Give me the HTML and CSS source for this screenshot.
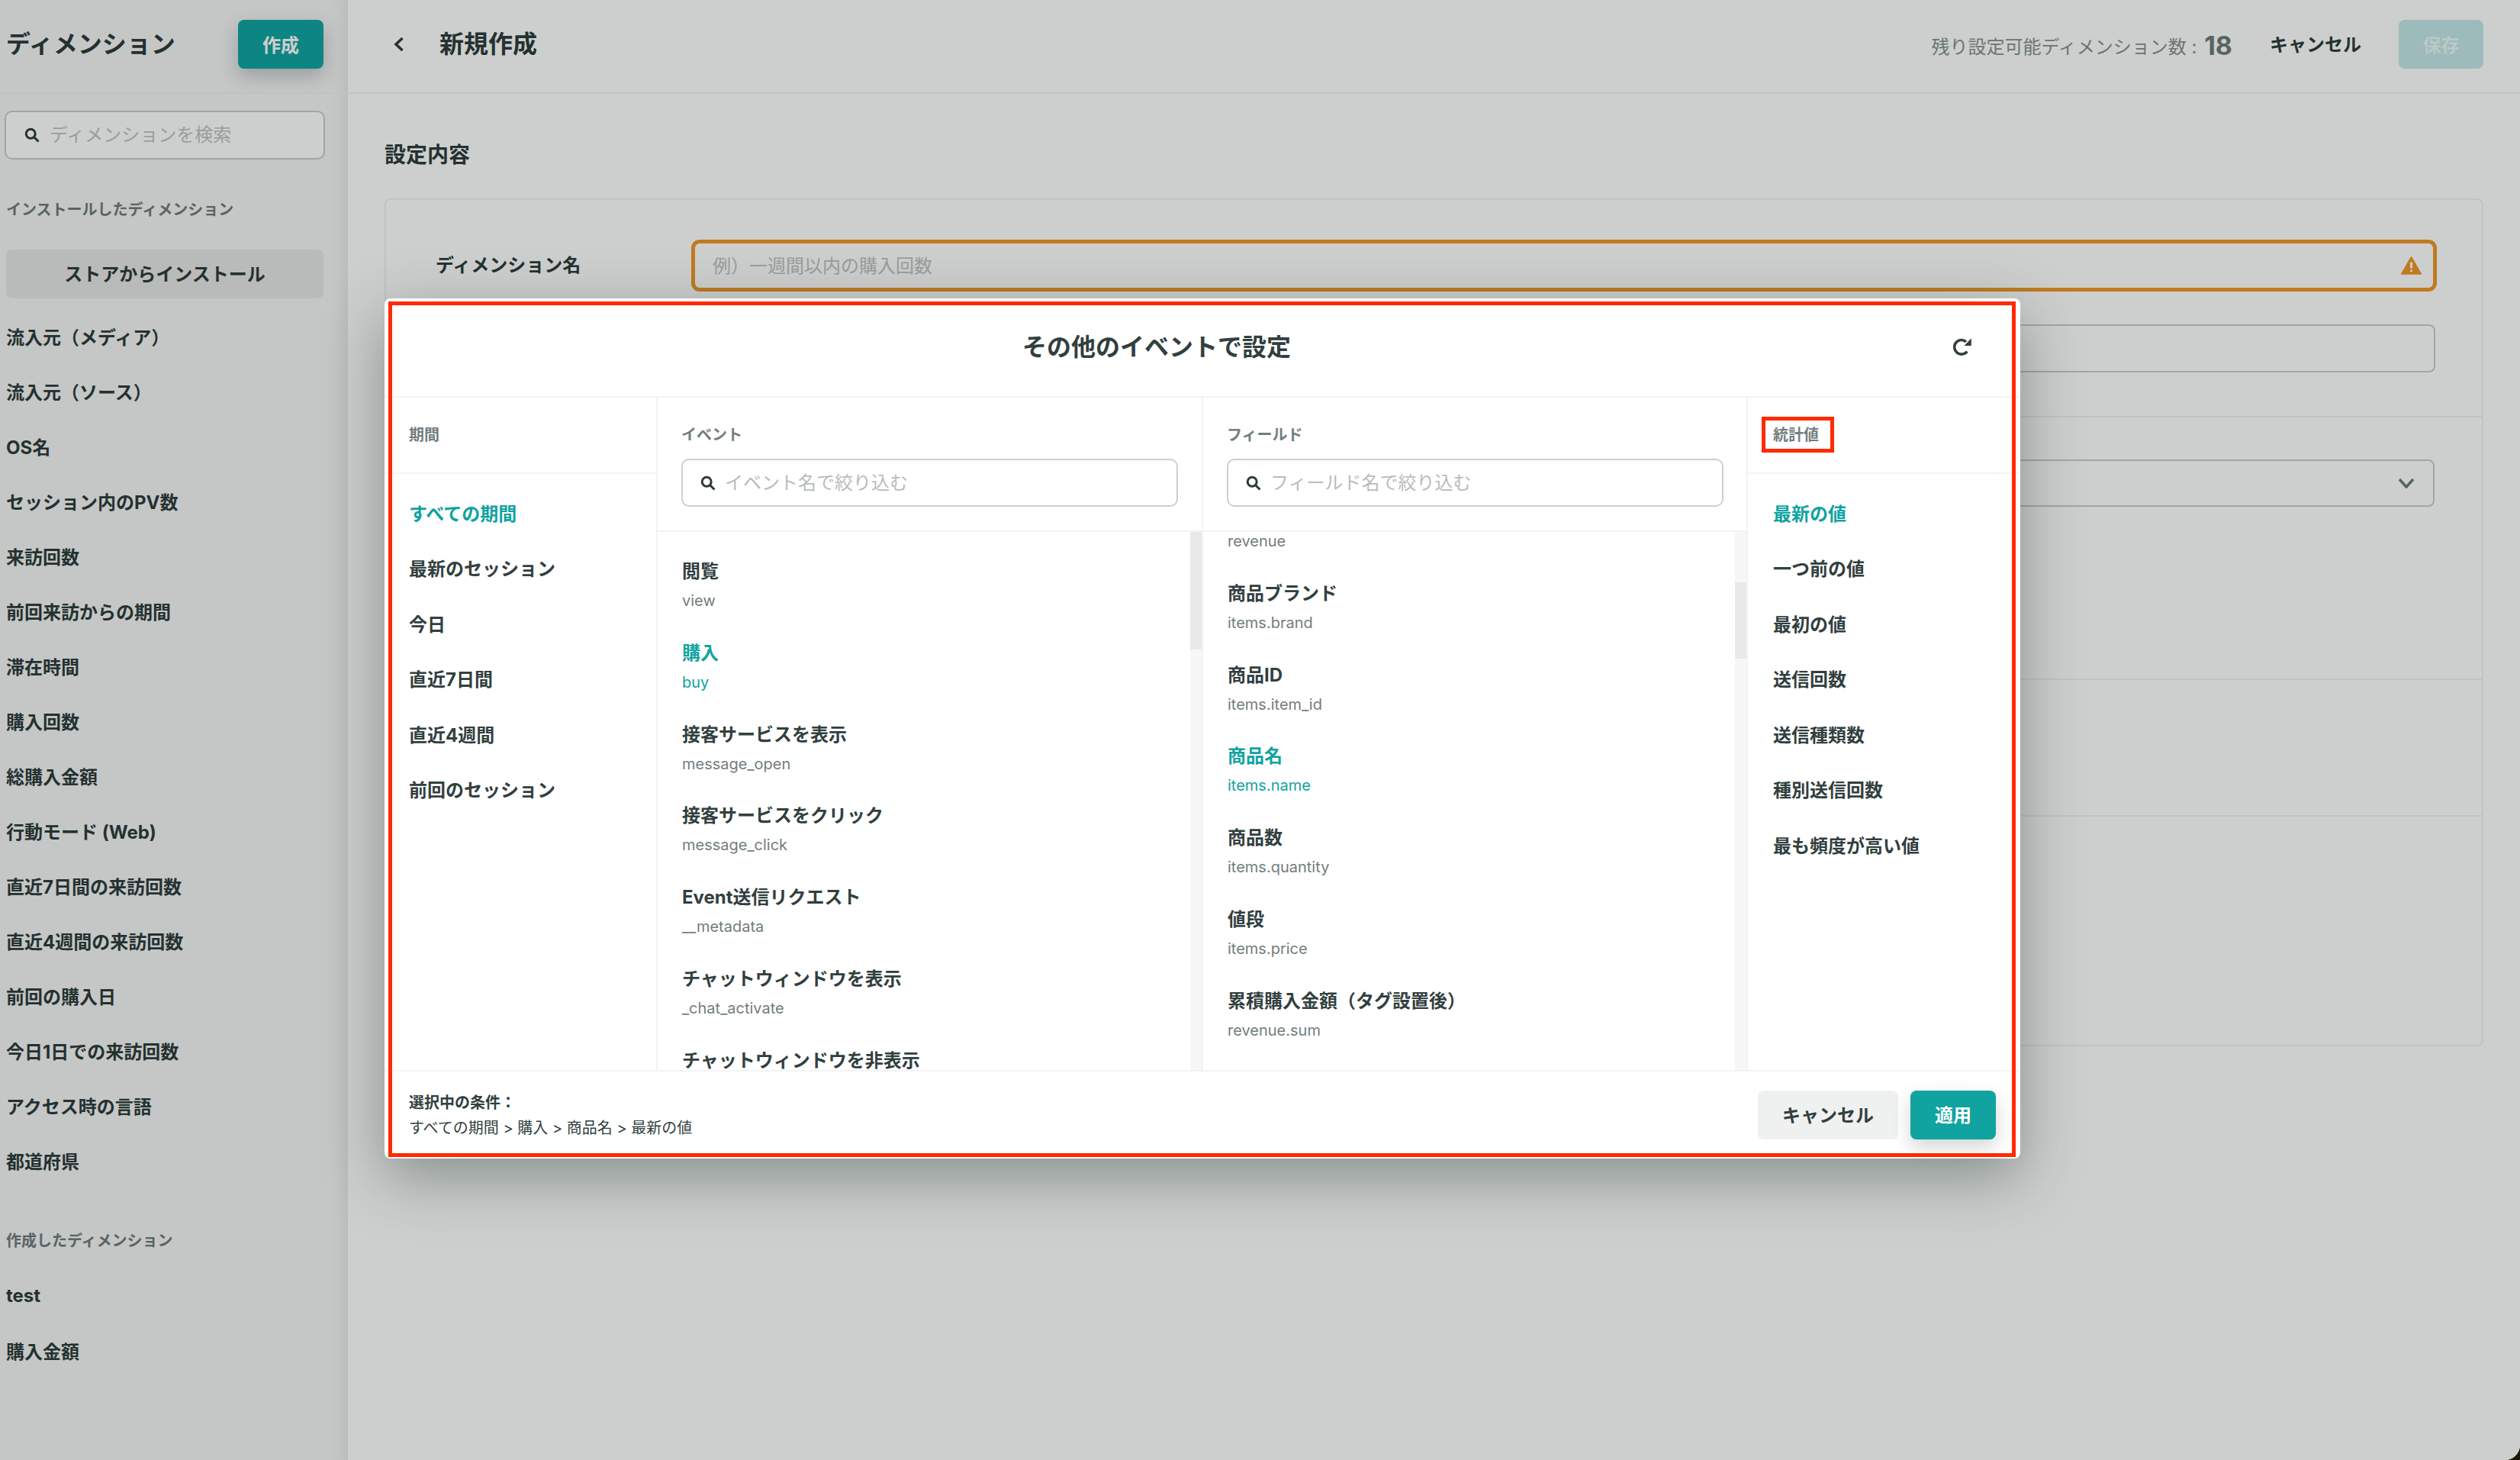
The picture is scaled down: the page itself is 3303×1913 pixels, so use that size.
FILE: index.html
```html
<!DOCTYPE html>
<html lang="ja">
<head>
<meta charset="utf-8">
<title>ディメンション 新規作成</title>
<link rel="stylesheet" href="styles.css">
</head>
<body>
<div class="app">
  <aside class="sidebar">
    <div class="side-head">
      <h1 class="side-title">ディメンション</h1>
      <button class="btn-create">作成</button>
    </div>
    <div class="side-body">
      <div class="side-search">
        <svg class="icon-search" viewBox="0 0 20 20"><circle cx="8.2" cy="8.2" r="6" /><path d="M12.6 12.6 18.5 18.5" /></svg>
        <span class="ph-side">ディメンションを検索</span>
      </div>
      <div class="side-label side-label-first">インストールしたディメンション</div>
      <button class="btn-store">ストアからインストール</button>
      <ul class="side-list">
        <li>流入元（メディア）</li>
        <li>流入元（ソース）</li>
        <li>OS名</li>
        <li>セッション内のPV数</li>
        <li>来訪回数</li>
        <li>前回来訪からの期間</li>
        <li>滞在時間</li>
        <li>購入回数</li>
        <li>総購入金額</li>
        <li>行動モード (Web)</li>
        <li>直近7日間の来訪回数</li>
        <li>直近4週間の来訪回数</li>
        <li>前回の購入日</li>
        <li>今日1日での来訪回数</li>
        <li>アクセス時の言語</li>
        <li>都道府県</li>
      </ul>
      <div class="side-label side-label-second">作成したディメンション</div>
      <ul class="side-list side-list-second">
        <li>test</li>
        <li>購入金額</li>
      </ul>
    </div>
  </aside>

  <main class="main">
    <header class="main-head">
      <svg class="icon-back" viewBox="0 0 14 20"><path d="M11.5 2 3 10l8.500 8" /></svg>
      <h2 class="main-title">新規作成</h2>
      <div class="main-actions">
        <span class="remain">残り設定可能ディメンション数 : <b class="remain-num">18</b></span>
        <span class="link-cancel">キャンセル</span>
        <button class="btn-save">保存</button>
      </div>
    </header>
    <div class="main-body">
      <h3 class="section-title">設定内容</h3>
      <section class="card">
        <div class="card-row row-name">
          <div class="field">
            <label class="field-label">ディメンション名</label>
            <div class="input input-warn">
              <span class="ph-input">例）一週間以内の購入回数</span>
              <svg class="icon-warn" viewBox="0 0 27 24"><path class="warn-tri" d="M13.500 1.200 26 22.800H1Z" /><path class="warn-mark" d="M13.500 7.500v8M13.500 17.400v2.600" /></svg>
            </div>
          </div>
          <div class="field field-second">
            <label class="field-label"></label>
            <div class="input input-second"></div>
          </div>
        </div>
        <div class="card-row row-select">
          <div class="field">
            <label class="field-label"></label>
            <div class="input input-select">
              <svg class="icon-chev" viewBox="0 0 22 14"><path d="M2 2 11 12 20 2" /></svg>
            </div>
          </div>
        </div>
        <div class="card-row row-third"></div>
        <div class="card-row row-fourth"></div>
      </section>
    </div>
  </main>

  <div class="overlay"></div>

  <div class="modal">
    <div class="modal-head">
      <h2 class="modal-title">その他のイベントで設定</h2>
      <svg class="icon-refresh" viewBox="0 0 24 24"><path class="ref-arc" d="M18.300 17.500A9.300 9.300 0 1 1 17 4.800" /><path class="ref-head" d="M23.800 .3V10H14.500Z" /></svg>
    </div>
    <div class="modal-body">
      <div class="col col-period">
        <div class="col-head col-head-plain"><span class="col-label">期間</span></div>
        <ul class="opts">
          <li class="active">すべての期間</li>
          <li>最新のセッション</li>
          <li>今日</li>
          <li>直近7日間</li>
          <li>直近4週間</li>
          <li>前回のセッション</li>
        </ul>
      </div>
      <div class="col col-event">
        <div class="col-head col-head-search">
          <span class="col-label">イベント</span>
          <div class="modal-search">
            <svg class="icon-search" viewBox="0 0 20 20"><circle cx="8.2" cy="8.2" r="6" /><path d="M12.6 12.6 18.5 18.5" /></svg>
            <span class="ph-modal">イベント名で絞り込む</span>
          </div>
        </div>
        <div class="scroll">
          <ul class="rows">
            <li><span class="r-name">閲覧</span><span class="r-sub">view</span></li>
            <li class="active"><span class="r-name">購入</span><span class="r-sub">buy</span></li>
            <li><span class="r-name">接客サービスを表示</span><span class="r-sub">message_open</span></li>
            <li><span class="r-name">接客サービスをクリック</span><span class="r-sub">message_click</span></li>
            <li><span class="r-name">Event送信リクエスト</span><span class="r-sub">__metadata</span></li>
            <li><span class="r-name">チャットウィンドウを表示</span><span class="r-sub">_chat_activate</span></li>
            <li><span class="r-name">チャットウィンドウを非表示</span></li>
          </ul>
          <div class="track"><div class="thumb thumb-event"></div></div>
        </div>
      </div>
      <div class="col col-field">
        <div class="col-head col-head-search col-head-field">
          <span class="col-label">フィールド</span>
          <div class="modal-search">
            <svg class="icon-search" viewBox="0 0 20 20"><circle cx="8.2" cy="8.2" r="6" /><path d="M12.6 12.6 18.5 18.5" /></svg>
            <span class="ph-modal">フィールド名で絞り込む</span>
          </div>
        </div>
        <div class="scroll">
          <ul class="rows rows-scrolled">
            <li><span class="r-sub">revenue</span></li>
            <li><span class="r-name">商品ブランド</span><span class="r-sub">items.brand</span></li>
            <li><span class="r-name">商品ID</span><span class="r-sub">items.item_id</span></li>
            <li class="active"><span class="r-name">商品名</span><span class="r-sub">items.name</span></li>
            <li><span class="r-name">商品数</span><span class="r-sub">items.quantity</span></li>
            <li><span class="r-name">値段</span><span class="r-sub">items.price</span></li>
            <li><span class="r-name">累積購入金額（タグ設置後）</span><span class="r-sub">revenue.sum</span></li>
          </ul>
          <div class="track"><div class="thumb thumb-field"></div></div>
        </div>
      </div>
      <div class="col col-stat">
        <div class="col-head col-head-plain"><span class="col-label">統計値</span></div>
        <ul class="opts">
          <li class="active">最新の値</li>
          <li>一つ前の値</li>
          <li>最初の値</li>
          <li>送信回数</li>
          <li>送信種類数</li>
          <li>種別送信回数</li>
          <li>最も頻度が高い値</li>
        </ul>
      </div>
    </div>
    <div class="modal-foot">
      <div class="cond">
        <div class="cond-title">選択中の条件：</div>
        <div class="cond-path">すべての期間 &gt; 購入 &gt; 商品名 &gt; 最新の値</div>
      </div>
      <div class="foot-btns">
        <button class="btn-cancel">キャンセル</button>
        <button class="btn-apply">適用</button>
      </div>
    </div>
    <div class="mark mark-modal"></div>
    <div class="mark mark-stat"></div>
  </div>
</div>
</body>
</html>
```

FILE: styles.css
```css
* { box-sizing: border-box; }
html, body { margin: 0; padding: 0; width: 3303px; height: 1913px; overflow: hidden; background: #1a1a08; }
body { font-family: Inter, "Noto Sans CJK JP", "Noto Sans", sans-serif; color: #2c3a3a; font-size: 24px; }
h1, h2, h3, ul { margin: 0; padding: 0; list-style: none; }
button { font-family: inherit; border: 0; padding: 0; }

.app { position: relative; display: flex; width: 3303px; height: 1913px; background: #fff; border-bottom-right-radius: 20px; overflow: hidden; }

/* sidebar */
.sidebar { width: 456px; flex: none; background: #f5f5f5; box-shadow: inset -24px 0 24px -24px rgba(0,0,0,.1); }
.side-head { height: 123px; border-bottom: 2px solid #f0f0f0; display: flex; align-items: center; justify-content: space-between; padding: 0 32px 6px 8px; }
.side-title { font-size: 32px; font-weight: 700; line-height: 44px; }
.btn-create { width: 112px; height: 64px; border-radius: 8px; background: #10a3a0; color: #fff; font-size: 24px; font-weight: 700; box-shadow: 0 10px 24px rgba(30,50,50,.25); }
.side-body { padding: 22px 32px 0 8px; }
.side-search { width: 420px; height: 64px; margin-left: -2px; border: 2px solid #c6cccb; border-radius: 10px; background: #fff; display: flex; align-items: center; padding-left: 24px; gap: 13px; }
.icon-search { width: 20px; height: 20px; flex: none; fill: none; stroke: #2c3a3a; stroke-width: 3; }
.ph-side { color: #bcc2c1; line-height: 32px; }
.side-label { font-size: 20px; line-height: 28px; color: #6c7a7a; font-weight: 700; }
.side-label-first { margin-top: 52px; }
.side-label-second { margin-top: 54px; }
.btn-store { display: block; width: 416px; height: 64px; margin-top: 38px; padding-bottom: 3px; background: #e6e6e6; border-radius: 8px; color: #2c3a3a; font-size: 24px; font-weight: 700; }
.side-list { margin-top: 15px; }
.side-list-second { margin-top: 23px; }
.side-list li { height: 72px; padding-bottom: 3px; display: flex; align-items: center; font-weight: 700; white-space: nowrap; }

/* main */
.main { flex: 1; min-width: 0; background: #fff; }
.main-head { height: 123px; border-bottom: 2px solid #f0f0f0; display: flex; align-items: center; padding: 0 48px 6px 60px; }
.icon-back { width: 14px; height: 20px; fill: none; stroke: #2c3a3a; stroke-width: 3.500; flex: none; }
.main-title { font-size: 32px; font-weight: 700; line-height: 44px; margin-left: 46px; }
.main-actions { margin-left: auto; display: flex; align-items: center; }
.remain { color: #84908f; font-size: 24px; display: flex; align-items: center; white-space: pre; margin-top: 4px; }
.remain-num { font-size: 34px; font-weight: 700; color: #6c7a7a; margin-left: 3px; }
.link-cancel { margin-left: 49px; font-weight: 700; margin-top: -2px; }
.btn-save { width: 111px; height: 64px; margin-left: 49px; background: #c2e6e6; color: #ebf7f7; font-size: 24px; font-weight: 700; border-radius: 8px; }
.main-body { padding: 0 48px; }
.section-title { font-size: 28px; font-weight: 700; line-height: 40px; margin-top: 60px; }
.card { margin-top: 37px; border: 2px solid #f0f0f0; border-radius: 8px; height: 1111px; }
.card-row { border-bottom: 2px solid #f0f0f0; }
.card-row:last-child { border-bottom: 0; }
.row-name { height: 285px; padding-top: 55px; }
.row-select { height: 344px; padding-top: 55px; }
.row-third { height: 179px; }
.row-fourth { height: 300px; }
.field { display: flex; align-items: center; padding: 0 62px 0 65px; }
.field-second { margin-top: 46px; padding-right: 61px; }
.field-label { width: 338px; flex: none; font-weight: 700; line-height: 34px; }
.input { flex: 1; height: 62px; border: 2px solid #c6cccb; border-radius: 8px; background: #fff; display: flex; align-items: center; justify-content: space-between; padding: 0 15px 0 23px; }
.input-second { height: 63px; }
.input-warn { border-color: #ef9724; box-shadow: 0 0 0 3px #ef9724; }
.input-select { justify-content: flex-end; padding-right: 24px; }
.ph-input { color: #bcc2c1; padding-bottom: 3px; }
.icon-warn { width: 27px; height: 24px; flex: none; }
.warn-tri { fill: #ef9724; stroke: #ef9724; stroke-width: 2; stroke-linejoin: round; }
.warn-mark { fill: none; stroke: #fff; stroke-width: 3; }
.icon-chev { width: 22px; height: 14px; fill: none; stroke: #6c7a7a; stroke-width: 3.500; }

/* overlay + modal */
.overlay { position: absolute; inset: 0; background: rgba(5,15,10,.2); }
.modal { position: absolute; left: 504px; top: 391px; width: 2144px; height: 1127px; background: #fff; border-radius: 8px; display: flex; flex-direction: column; box-shadow: 0 24px 80px rgba(20,40,40,.38); }
.modal-head { height: 130px; flex: none; border-bottom: 2px solid #f3f3f3; display: flex; align-items: center; justify-content: center; position: relative; padding: 0 120px 0 0; }
.modal-title { font-size: 32px; font-weight: 700; line-height: 44px; color: #323f3f; }
.icon-refresh { width: 24px; height: 24px; position: absolute; left: 2056px; top: 52px; }
.ref-arc { fill: none; stroke: #323f3f; stroke-width: 3.600; }
.ref-head { fill: #323f3f; }
.modal-body { flex: 1; min-height: 0; display: flex; }
.col { display: flex; flex-direction: column; border-right: 2px solid #f3f3f3; min-height: 0; }
.col-period { width: 358px; }
.col-event { width: 715px; }
.col-field { width: 714px; }
.col-stat { flex: 1; border-right: 0; }
.col-head { flex: none; border-bottom: 2px solid #f3f3f3; }
.col-head-plain { height: 100px; display: flex; align-items: center; padding: 0 32px; }
.col-stat .col-head-plain, .col-stat .opts { padding-left: 33px; }
.col-head-search { height: 176px; padding: 35px 31px 0; display: flex; flex-direction: column; }
.col-head-field { padding-right: 30px; }
.col-label { font-size: 20px; line-height: 28px; font-weight: 700; color: #727d7d; }
.modal-search { height: 63px; margin-top: 17px; border: 2px solid #ccd0d0; border-radius: 10px; display: flex; align-items: center; padding-left: 23px; gap: 12px; }
.ph-modal { color: #b7bcbc; line-height: 32px; }
.opts { padding: 14px 32px 0; }
.opts li { height: 72.500px; display: flex; align-items: center; font-weight: 700; color: #323f3f; white-space: nowrap; }
.opts li.active, .rows li.active .r-name, .rows li.active .r-sub { color: #10a3a0; }
.scroll { flex: 1; min-height: 0; position: relative; overflow: hidden; }
.rows { padding: 35px 32px 0; }
.rows li { display: flex; flex-direction: column; gap: 7px; margin-bottom: 37.800px; }
.rows-scrolled { margin-top: -2px; padding-top: 0; }
.r-name { line-height: 34px; font-weight: 700; color: #323f3f; white-space: nowrap; }
.r-sub { line-height: 28px; font-size: 20px; color: #727d7d; }
.track { position: absolute; right: 0; top: 0; bottom: 0; width: 15px; background: #f7f7f7; }
.thumb { position: absolute; left: 0; right: 0; background: #e8e9e9; }
.thumb-event { top: 0; height: 154px; }
.thumb-field { top: 66px; height: 100px; }
.modal-foot { height: 116px; flex: none; border-top: 2px solid #f3f3f3; display: flex; align-items: center; justify-content: space-between; padding: 0 32px; }
.cond { font-size: 20px; line-height: 28px; color: #323f3f; margin-top: 1px; }
.cond-title { font-weight: 700; }
.cond-path { margin-top: 5px; }
.foot-btns { display: flex; gap: 16px; margin-top: -1px; }
.btn-cancel { width: 184px; height: 64px; padding-bottom: 2px; background: #eff1f1; border-radius: 8px; color: #323f3f; font-size: 24px; font-weight: 700; }
.btn-apply { width: 112px; height: 64px; padding-bottom: 2px; background: #10a3a0; border-radius: 8px; color: #fff; font-size: 24px; font-weight: 700; box-shadow: 0 10px 24px rgba(30,50,50,.2); }

/* red annotation boxes drawn over the modal */
.mark { position: absolute; border: 5px solid #ff2a00; pointer-events: none; }
.mark-modal { left: 5px; top: 4px; right: 6px; bottom: 2px; }
.mark-stat { left: 1805px; top: 155px; width: 95px; height: 47px; }
```
